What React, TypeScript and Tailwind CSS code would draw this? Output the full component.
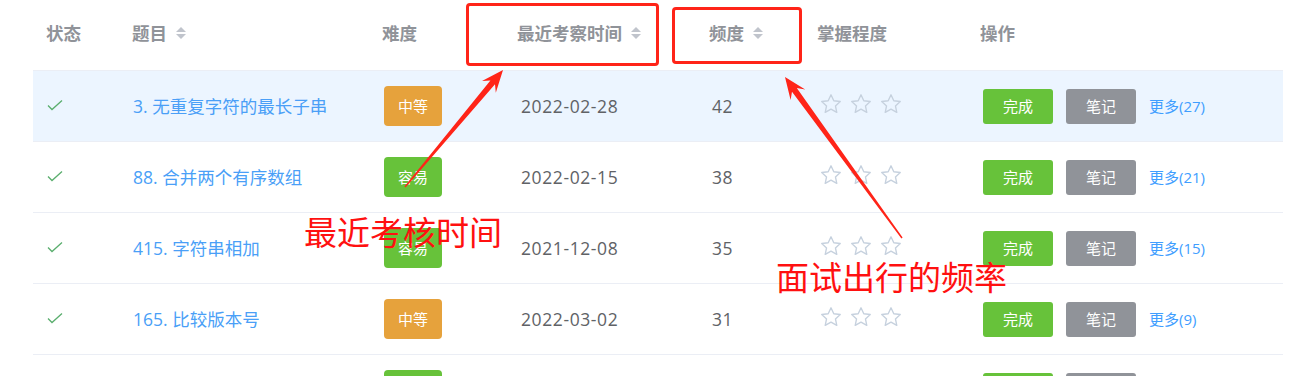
import React from "react";

const rows = [
    { title: "3. 无重复字符的最长子串", level: "中等", date: "2022-02-28", freq: 42, more: 27, active: true },
    { title: "88. 合并两个有序数组", level: "容易", date: "2022-02-15", freq: 38, more: 21, active: false },
    { title: "415. 字符串相加", level: "容易", date: "2021-12-08", freq: 35, more: 15, active: false },
    { title: "165. 比较版本号", level: "中等", date: "2022-03-02", freq: 31, more: 9, active: false },
    { title: "1. 两数之和", level: "容易", date: "2022-03-04", freq: 30, more: 8, active: false },
];

const SortIcon = () => (
    <svg width="10" height="12" viewBox="0 0 10 12" className="ml-[9px] shrink-0">
        <polygon points="0,5 5,0 10,5" fill="#c0c4cc" />
        <polygon points="0,7 10,7 5,12" fill="#c0c4cc" />
    </svg>
);

const Check = () => (
    <svg width="16" height="12" viewBox="0 0 16 12">
        <polyline points="1,5.5 5,9.5 15,0.5" fill="none" stroke="#5aae6e" strokeWidth="1.3" />
    </svg>
);

const Star = () => (
    <svg width="20" height="19" viewBox="1.8 1.8 20.4 19.4">
        <path
            d="M12 2.6l2.85 6.1 6.6.75-4.9 4.55 1.35 6.55L12 17.25 6.1 20.55l1.35-6.55-4.9-4.55 6.6-.75z"
            fill="none"
            stroke="#c6d1de"
            strokeWidth="1.4"
            strokeLinejoin="round"
        />
    </svg>
);

const Annotations = () => (
    <div className="pointer-events-none absolute inset-0">
        {/* 红框 */}
        <div className="absolute left-[466px] top-[3px] h-[63px] w-[193px] rounded-[4px] border-[3px] border-[#ff2418]" />
        <div className="absolute left-[672px] top-[7px] h-[57px] w-[130px] rounded-[4px] border-[3px] border-[#ff2418]" />

        {/* 箭头 */}
        <svg className="absolute left-0 top-0" width="1292" height="376">
            <polygon
                points="404.5,186.6 490.4,80.4 482,81.1 503,70 495.8,92.7 495,84.2 405.5,187.4"
                fill="#ff2418"
            />
            <polygon
                points="901.4,238.4 792,91.7 790.6,100.1 785,77 805.2,89.5 796.8,88.1 902.6,237.6"
                fill="#ff2418"
            />
        </svg>

        <div className="absolute left-[304px] top-[215px] text-[33px] leading-none text-[#ff1010] [font-family:'Noto_Sans_CJK_SC',sans-serif]">
            最近考核时间
        </div>
        <div className="absolute left-[776px] top-[260px] text-[33px] leading-none text-[#ff1010] [font-family:'Noto_Sans_CJK_SC',sans-serif]">
            面试出行的频率
        </div>
    </div>
);

export default function App() {
    return (
        <div className="relative h-[376px] w-[1292px] overflow-hidden bg-white [font-family:'Open_Sans','Noto_Sans_CJK_SC',sans-serif]">
            <div className="ml-[33px] w-[1250px]">
                {/* 表头 */}
                <div className="grid h-[71px] grid-cols-[87px_250px_135px_192px_108px_163px_315px] items-center border-b border-[#ebeef5] pb-[4px] text-[17.5px] font-bold text-[#909399]">
                    <div className="pl-[13px]">状态</div>
                    <div className="flex items-center pl-[12px]">
                        题目
                        <SortIcon />
                    </div>
                    <div className="pl-[12px]">难度</div>
                    <div className="flex items-center pl-[12px]">
                        最近考察时间
                        <SortIcon />
                    </div>
                    <div className="flex items-center pl-[12px]">
                        频度
                        <SortIcon />
                    </div>
                    <div className="pl-[12px]">掌握程度</div>
                    <div className="pl-[12px]">操作</div>
                </div>

                {/* 表格内容 */}
                {rows.map((row) => (
                    <div
                        key={row.title}
                        className={`grid h-[71px] grid-cols-[87px_250px_135px_192px_108px_163px_315px] items-center border-b border-[#ebeef5] text-[17.5px] ${
                            row.active ? "bg-[#ecf5ff]" : "bg-white"
                        }`}
                    >
                        <div className="flex pl-[14px]">
                            <Check />
                        </div>
                        <div className="pl-[13px] text-[#4a9ff7]">{row.title}</div>
                        <div className="pl-[14px]">
                            <span
                                className={`flex h-[40px] w-[58px] items-center justify-center rounded-[4px] text-[15px] text-white ${
                                    row.level === "中等" ? "bg-[#e6a23c]" : "bg-[#67c23a]"
                                }`}
                            >
                                {row.level}
                            </span>
                        </div>
                        <div className="pl-[16px] tracking-[0.6px] text-[#606266]">{row.date}</div>
                        <div className="pl-[15px] tracking-[0.5px] text-[#606266]">{row.freq}</div>
                        <div className="flex gap-[10px] pb-[5px] pl-[16px]">
                            <Star />
                            <Star />
                            <Star />
                        </div>
                        <div className="flex items-center pl-[15px]">
                            <button className="h-[35px] w-[70px] rounded-[3px] bg-[#67c23a] text-[15px] text-white">
                                完成
                            </button>
                            <button className="ml-[13px] h-[35px] w-[70px] rounded-[3px] bg-[#909399] text-[15px] text-white">
                                笔记
                            </button>
                            <span className="ml-[13px] text-[15px] text-[#409eff]">更多({row.more})</span>
                        </div>
                    </div>
                ))}
            </div>

            <Annotations />
        </div>
    );
}
